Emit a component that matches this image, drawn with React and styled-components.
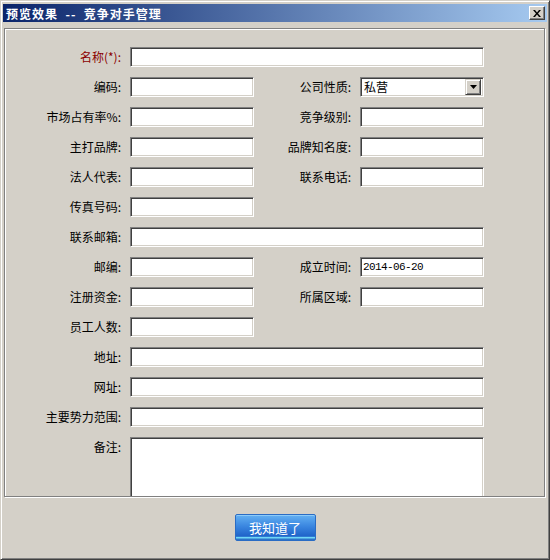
import styled, { createGlobalStyle } from 'styled-components';

const GlobalStyle = createGlobalStyle`
  html, body {
    margin: 0;
    padding: 0;
    background: #d4d0c8;
  }
  body {
    font-family: "Noto Sans CJK SC", "Liberation Sans", sans-serif;
    font-size: 12px;
  }
`;

const Window = styled.div`
  box-sizing: border-box;
  width: 550px;
  height: 560px;
  display: flex;
  flex-direction: column;
  padding: 2px;
  background: #d4d0c8;
  border: 1px solid;
  border-color: #d4d0c8 #404040 #404040 #d4d0c8;
  box-shadow: inset 1px 1px 0 #fff, inset -1px -1px 0 #808080;
`;

const TitleBar = styled.div`
  display: flex;
  align-items: center;
  justify-content: space-between;
  height: 18px;
  margin-top: 1px;
  padding: 0 2px 0 3px;
  background: linear-gradient(to right, #0a246a, #a6caf0);
`;

const Title = styled.span`
  color: #fff;
  font-weight: bold;
  font-size: 12px;
  letter-spacing: 1px;
  white-space: pre;
`;

const CloseButton = styled.button`
  box-sizing: border-box;
  width: 16px;
  height: 14px;
  padding: 0;
  display: flex;
  align-items: center;
  justify-content: center;
  background: #d4d0c8;
  border: 1px solid;
  border-color: #fff #404040 #404040 #fff;
  box-shadow: inset -1px -1px 0 #808080;
`;

const Panel = styled.div`
  box-sizing: border-box;
  height: 469px;
  margin: 6px 2px 0 1px;
  padding: 18px 0 0 0;
  border: 1px solid #808080;
  box-shadow: inset 1px 1px 0 #fff, 1px 1px 0 #fff;
  overflow: hidden;
`;

const Form = styled.div`
  display: grid;
  grid-template-columns: 116px 124px 88px 124px;
  grid-auto-rows: 20px;
  column-gap: 9px;
  row-gap: 10px;
  align-items: center;
`;

const Label = styled.label`
  grid-column: ${(p) => p.$col || 'auto'};
  text-align: right;
  line-height: 20px;
  color: ${(p) => (p.$required ? '#8b0000' : '#000')};
  white-space: nowrap;
  align-self: ${(p) => (p.$top ? 'start' : 'center')};
`;

const insetBorder = `
  box-sizing: border-box;
  border: 1px solid;
  border-color: #808080 #fff #fff #808080;
  box-shadow: inset 1px 1px 0 #404040, inset -1px -1px 0 #d4d0c8;
  background: #fff;
`;

const Input = styled.input`
  ${insetBorder}
  grid-column: ${(p) => (p.$wide ? 'span 3' : 'auto')};
  width: 100%;
  height: 20px;
  margin: 0;
  padding: 0 2px;
  font-family: "Liberation Mono", "Noto Sans CJK SC", monospace;
  font-size: 11px;
  letter-spacing: -0.6px;
  color: #000;
  outline: none;
`;

const TextArea = styled.textarea`
  ${insetBorder}
  grid-column: span 3;
  grid-row: span 4;
  width: 100%;
  height: 90px;
  margin: 0;
  align-self: start;
  resize: none;
  outline: none;
`;

const Select = styled.div`
  ${insetBorder}
  display: flex;
  align-items: center;
  justify-content: space-between;
  height: 20px;
  padding: 2px 2px 2px 3px;
`;

const SelectValue = styled.span`
  color: #000;
  line-height: 16px;
`;

const SelectArrow = styled.span`
  box-sizing: border-box;
  width: 16px;
  height: 16px;
  display: flex;
  align-items: center;
  justify-content: center;
  background: #d4d0c8;
  border: 1px solid;
  border-color: #d4d0c8 #404040 #404040 #d4d0c8;
  box-shadow: inset 1px 1px 0 #fff, inset -1px -1px 0 #808080;
`;

const Footer = styled.div`
  flex: 1;
  display: flex;
  align-items: center;
  justify-content: center;
`;

const OkButton = styled.button`
  box-sizing: border-box;
  width: 81px;
  height: 27px;
  padding: 0;
  color: #fff;
  font-family: "Noto Sans CJK SC", sans-serif;
  font-size: 13px;
  border: 1px solid #2a6cc4;
  border-radius: 2px;
  background: linear-gradient(#63b0f2 0%, #3a86e0 45%, #1f63c9 85%, #6fd6f6 90%, #1c5cbd 100%);
  box-shadow: inset 0 1px 0 #8ccaf8;
`;

const Row = ({ label, required, children }) => (
  <>
    <Label $required={required}>{label}</Label>
    {children}
  </>
);

const App = () => (
  <>
    <GlobalStyle />
    <Window>
      <TitleBar>
        <Title>预览效果  --  竞争对手管理</Title>
        <CloseButton>
          <svg width="8" height="7" viewBox="0 0 8 7">
            <path d="M0 0h2l2 2.5L6 0h2L5 3.5 8 7H6L4 4.5 2 7H0l3-3.5z" fill="#000" />
          </svg>
        </CloseButton>
      </TitleBar>
      <Panel>
        <Form>
          <Row label="名称(*):" required><Input $wide /></Row>
          <Row label="编码:"><Input /></Row>
          <Row label="公司性质:">
            <Select>
              <SelectValue>私营</SelectValue>
              <SelectArrow>
                <svg width="7" height="4" viewBox="0 0 7 4"><path d="M0 0h7L3.5 4z" fill="#000" /></svg>
              </SelectArrow>
            </Select>
          </Row>
          <Row label="市场占有率%:"><Input /></Row>
          <Row label="竞争级别:"><Input /></Row>
          <Row label="主打品牌:"><Input /></Row>
          <Row label="品牌知名度:"><Input /></Row>
          <Row label="法人代表:"><Input /></Row>
          <Row label="联系电话:"><Input /></Row>
          <Row label="传真号码:"><Input /></Row>
          <Label $col="3 / span 2" />
          <Row label="联系邮箱:"><Input $wide /></Row>
          <Row label="邮编:"><Input /></Row>
          <Row label="成立时间:"><Input defaultValue="2014-06-20" /></Row>
          <Row label="注册资金:"><Input /></Row>
          <Row label="所属区域:"><Input /></Row>
          <Row label="员工人数:"><Input /></Row>
          <Label $col="3 / span 2" />
          <Row label="地址:"><Input $wide /></Row>
          <Row label="网址:"><Input $wide /></Row>
          <Row label="主要势力范围:"><Input $wide /></Row>
          <Label $top>备注:</Label>
          <TextArea />
        </Form>
      </Panel>
      <Footer>
        <OkButton>我知道了</OkButton>
      </Footer>
    </Window>
  </>
);

export default App;
